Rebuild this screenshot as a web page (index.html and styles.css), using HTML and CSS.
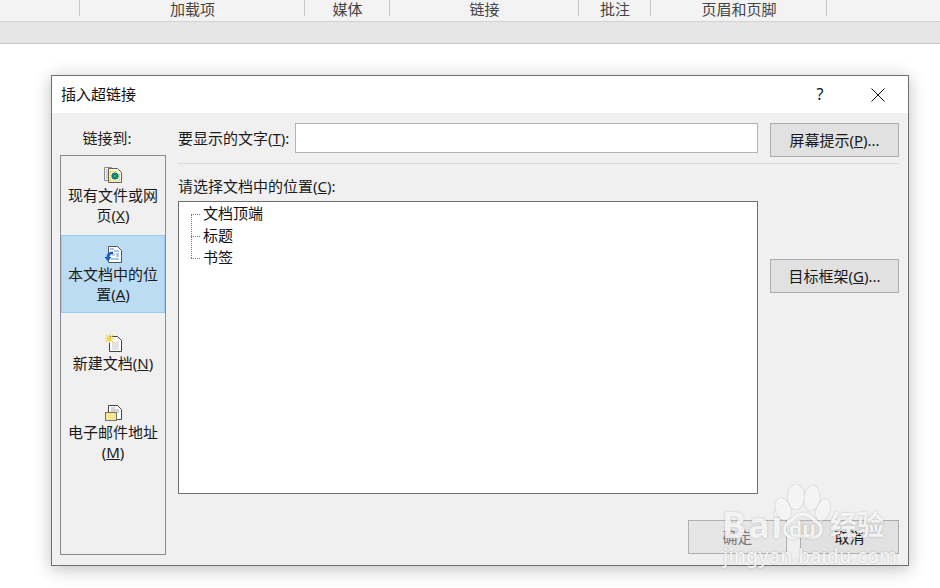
FILE: index.html
```html
<!DOCTYPE html>
<html lang="zh-CN">
<head>
<meta charset="utf-8">
<title>插入超链接</title>
<link rel="stylesheet" href="styles.css">
</head>
<body>
<div class="ribbon">
  <div class="group g0"></div>
  <div class="group g1">加载项</div>
  <div class="group g2">媒体</div>
  <div class="group g3">链接</div>
  <div class="group g4">批注</div>
  <div class="group g5">页眉和页脚</div>
</div>
<div class="strip"></div>

<section class="dialog">
  <header class="titlebar">
    <span class="title">插入超链接</span>
    <span class="help">?</span>
    <svg class="close" width="14" height="14" viewBox="0 0 14 14"><path d="M.5.5l13 13M13.5.5l-13 13" stroke="#111" fill="none"/></svg>
  </header>
  <div class="body">
    <aside class="side">
      <div class="side-label">链接到:</div>
      <nav class="places">
        <div class="place p1">
          <svg class="ico" width="18" height="18" viewBox="0 0 18 18">
            <path d="M.5 1.500h7l2 2v11h-9z" fill="#f2f2ee" stroke="#8a8a8a"/>
            <path d="M2 4h5M2 6h3M2 8h3M2 10h3M2 12h3" stroke="#b5b5b5"/>
            <path d="M4.500 2.500h9l4 4v10h-13z" fill="#fffde0" stroke="#5f5f5f"/>
            <path d="M6 5.500h7M15.500 8v7M6 15h9.500M6 6v9" stroke="#f0c000" stroke-dasharray="1.500 1" fill="none"/>
            <circle cx="11" cy="10" r="3.600" fill="#0c6f82"/>
            <path d="M9 8l4 4M13 8l-4 4" stroke="#25c84c"/>
          </svg>
          <div class="place-text">现有文件或网<br>页(<u>X</u>)</div>
        </div>
        <div class="place p2">
          <svg class="ico" width="18" height="18" viewBox="0 0 18 18">
            <path d="M4.500 1.500h9l4 4v12h-13z" fill="#fff" stroke="#555"/>
            <path d="M6 4h4M10 6h5M12 9h3M12 11h3M7 14h8" stroke="#4d8fe0"/>
            <rect x="8" y="8" width="3" height="3" fill="#ccc"/>
            <path d="M9 6.500c-4 0-6.500 2.500-6.500 5.500H.5l3.500 4.500L7.500 12H5.500c0-1.500 1.500-3 3.500-3z" fill="#1a5fc8"/>
          </svg>
          <div class="place-text">本文档中的位<br>置(<u>A</u>)</div>
        </div>
        <div class="place p3">
          <svg class="ico" width="18" height="18" viewBox="0 0 18 18">
            <path d="M5.500 2.500h8l4 4v11h-12z" fill="#fff" stroke="#444"/>
            <path d="M8 9h7M8 11h7M8 13h7M8 15h7" stroke="#c4c4c4"/>
            <path d="M5.500 0v9M1 4.500h9M2 1l7 7M9 1L2 8" stroke="#f6d23a" stroke-width="1.200"/>
          </svg>
          <div class="place-text">新建文档(<u>N</u>)</div>
        </div>
        <div class="place p4">
          <svg class="ico" width="18" height="18" viewBox="0 0 18 18">
            <path d="M4.500 2.500h9l4 4v10h-13z" fill="#fff" stroke="#444"/>
            <path d="M7 5h4M7 7h8M7 9h8" stroke="#aaa"/>
            <rect x="1.500" y="9.500" width="11" height="8" fill="#f7e08a" stroke="#777"/>
            <path d="M3 11.500h8M3 13.500h8M3 15.500h8" stroke="#fff" stroke-dasharray="1 1"/>
          </svg>
          <div class="place-text">电子邮件地址<br>(<u>M</u>)</div>
        </div>
      </nav>
    </aside>
    <main class="content">
      <div class="top-row">
        <label class="label">要显示的文字(<u>T</u>):</label>
        <div class="input"></div>
        <button class="btn">屏幕提示(<u>P</u>)...</button>
      </div>
      <hr class="sep">
      <div class="label loc-label">请选择文档中的位置(<u>C</u>):</div>
      <div class="mid-row">
        <div class="tree">
          <div class="node">文档顶端</div>
          <div class="node">标题</div>
          <div class="node">书签</div>
        </div>
        <button class="btn frame">目标框架(<u>G</u>)...</button>
      </div>
      <div class="actions">
        <button class="btn act disabled">确定</button>
        <button class="btn act">取消</button>
      </div>
    </main>
  </div>
</section>

<div class="mark">
  <span class="mark-bai">Bai</span>
  <svg class="paw" width="54" height="58" viewBox="0 0 54 58">
    <g fill="#fff" fill-opacity=".8">
      <ellipse cx="7" cy="25" rx="7" ry="11" transform="rotate(-18 7 25)"/>
      <ellipse cx="20" cy="13" rx="8" ry="12"/>
      <ellipse cx="36" cy="14" rx="7.500" ry="12" transform="rotate(6 36 14)"/>
      <ellipse cx="47" cy="26" rx="6.500" ry="11" transform="rotate(18 47 26)"/>
    </g>
    <path d="M27 30c7 0 9 5 14 8 6 4 6 14-3 15.500-4 .6-7-1.500-11-1.500s-7 2.100-11 1.500C7 52 7 42 13 38c5-3 7-8 14-8z" fill="#fff" fill-opacity=".18" stroke="#fff" stroke-opacity=".8" stroke-width="3"/>
  </svg>
  <span class="mark-du">du</span>
  <span class="mark-jy">经验</span>
  <span class="mark-url">jingyan.baidu.com</span>
</div>
</body>
</html>
```
FILE: styles.css
```css
* { box-sizing: border-box; }
html, body { margin: 0; padding: 0; }
body {
  width: 940px; height: 588px; overflow: hidden; background: #fff; position: relative;
  font-family: "Noto Sans", "Noto Sans CJK SC", sans-serif;
  font-size: 15px; color: #1a1a1a;
}
u { text-underline-offset: 1px; }

.ribbon {
  height: 22px; background: #f3f3f3; border-bottom: 1px solid #d2d2d2;
  display: flex; color: #444;
}
.group {
  height: 21px; line-height: 19px; text-align: center; position: relative; flex: none;
}
.group::after {
  content: ""; position: absolute; right: 0; top: 0; height: 16px; border-right: 1px solid #c6c6c6;
}
.g0 { width: 80px; }
.g1 { width: 225px; }
.g2 { width: 85px; }
.g3 { width: 189px; }
.g4 { width: 72px; }
.g5 { width: 176px; }
.strip { height: 22px; background: #e6e6e6; border-bottom: 1px solid #c8c8c8; }

.dialog {
  position: absolute; left: 51px; top: 75px; width: 858px; height: 491px;
  background: #f0f0f0; border: 1px solid #6f6f6f;
  box-shadow: 0 3px 16px rgba(0,0,0,.26);
  display: flex; flex-direction: column;
}
.titlebar {
  height: 37px; background: #fff; flex: none; display: flex; align-items: center;
  padding-left: 9px; color: #111;
}
.title { flex: 1; margin-bottom: 3px; }
.help { width: 10px; margin-right: 46px; font-size: 16px; text-align: center; margin-bottom: 1px; }
.close { margin-right: 23px; }

.body { flex: 1; display: flex; min-height: 0; }
.side { width: 126px; padding: 15px 12px 10px 8px; display: flex; flex-direction: column; flex: none; }
.side-label { height: 27px; line-height: 20px; text-align: center; color: #222; padding-right: 12px; }
.places { flex: 1; width: 106px; border: 1px solid #8b8b93; background: #f0f0f0; }
.place { display: flex; flex-direction: column; align-items: center; text-align: center; line-height: 20px; color: #1a1a1a; }
.ico { display: block; }
.p1 { height: 79px; padding-top: 10px; }
.p2 { height: 78px; padding-top: 9px; background: #bcdcf4; border: 1px solid #9ccaef; }
.p3 { height: 70px; padding-top: 21px; }
.p4 { height: 90px; padding-top: 20px; }
.place-text { margin-top: 1px; white-space: nowrap; }

.content { flex: 1; padding-top: 10px; display: flex; flex-direction: column; min-width: 0; padding-right: 9px; }
.top-row { display: flex; align-items: flex-start; height: 34px; }
.label { line-height: 20px; white-space: nowrap; color: #1a1a1a; }
.top-row .label { width: 117px; padding-top: 5px; }
.input { width: 463px; height: 30px; background: #fff; border: 1px solid #b4b4b4; margin-right: 12px; }
.btn {
  font: inherit; color: #1a1a1a; background: #e1e1e1; border: 1px solid #adadad;
  width: 129px; height: 34px; padding: 0 0 2px; display: block; flex: none;
}
.sep { margin: 6px 0 0; border: 0; height: 1px; background: #dcdcdc; flex: none; }
.loc-label { margin-top: 12px; height: 25px; }
.mid-row { display: flex; align-items: flex-start; height: 293px; }
.tree {
  width: 580px; height: 293px; background: #fff; border: 1px solid #6e6e6e; margin-right: 12px;
}
.node { height: 22px; line-height: 22px; padding-left: 24px; position: relative; color: #111; }
.node::before {
  content: ""; position: absolute; left: 12px; top: 12px; width: 9px; border-top: 1px dotted #777;
}
.node::after {
  content: ""; position: absolute; left: 12px; top: 12px; height: 22px; border-left: 1px dotted #777;
}
.node:last-child::after { display: none; }
.frame { margin-top: 58px; }
.actions { display: flex; justify-content: flex-end; gap: 13px; margin-top: 26px; }
.act { width: 99px; height: 34px; background: #e1e1e1; }
.disabled { color: #7a7a7a; background: #e6e6e6; border-color: #b0b0b0; }

.mark {
  position: absolute; left: 720px; top: 484px; width: 172px; height: 84px; color: rgba(255,255,255,.85);
  pointer-events: none; text-shadow: 0 0 2px rgba(90,90,90,.4);
}
.mark-bai { font-size: 36px; font-weight: 700; line-height: 40px; letter-spacing: 2px; position: absolute; left: 2px; top: 21px; }
.paw { position: absolute; left: 56px; top: 0; filter: drop-shadow(0 0 1px rgba(90,90,90,.35)); }
.mark-du { font-size: 21px; font-weight: 700; line-height: 22px; position: absolute; left: 69px; top: 34px; }
.mark-jy { font-size: 27px; font-weight: 700; line-height: 30px; position: absolute; left: 110px; top: 26px; white-space: nowrap; }
.mark-url { font-size: 19px; line-height: 22px; position: absolute; left: 3px; top: 61px; white-space: nowrap; letter-spacing: .4px; font-weight: 500; }
```
